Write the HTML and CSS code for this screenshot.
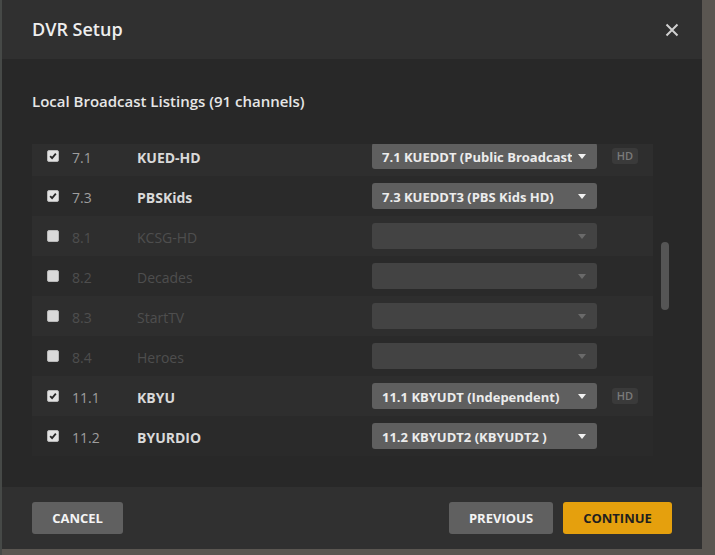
FILE: index.html
```html
<!DOCTYPE html>
<html lang="en">
<head>
<meta charset="utf-8">
<title>DVR Setup</title>
<link rel="stylesheet" href="styles.css">
</head>
<body>
<div class="modal">
  <div class="modal-header">
    <h1 class="modal-title">DVR Setup</h1>
    <button class="close-btn" aria-label="Close">
      <svg width="14" height="14" viewBox="0 0 14 14"><path d="M1.5 1.5 L12.5 12.5 M12.5 1.5 L1.5 12.5" stroke="#d0d0d0" stroke-width="2" fill="none"/></svg>
    </button>
  </div>
  <div class="modal-body">
    <h2 class="section-title">Local Broadcast Listings (91 channels)</h2>
    <div class="list-wrap">
      <div class="list">
        <div class="list-inner">
          <div class="row">
            <span class="cb checked"><svg viewBox="0 0 12 12"><path d="M2.6 6.2 L4.9 8.6 L9.4 3.2" /></svg></span>
            <span class="num">7.1</span>
            <span class="name">KUED-HD</span>
            <div class="select"><span class="select-text">7.1 KUEDDT (Public Broadcasting Service)</span><span class="caret"></span></div>
            <span class="badge">HD</span>
          </div>
          <div class="row">
            <span class="cb checked"><svg viewBox="0 0 12 12"><path d="M2.6 6.2 L4.9 8.6 L9.4 3.2" /></svg></span>
            <span class="num">7.3</span>
            <span class="name">PBSKids</span>
            <div class="select"><span class="select-text">7.3 KUEDDT3 (PBS Kids HD)</span><span class="caret"></span></div>
          </div>
          <div class="row off">
            <span class="cb"></span>
            <span class="num">8.1</span>
            <span class="name">KCSG-HD</span>
            <div class="select"><span class="select-text"></span><span class="caret"></span></div>
          </div>
          <div class="row off">
            <span class="cb"></span>
            <span class="num">8.2</span>
            <span class="name">Decades</span>
            <div class="select"><span class="select-text"></span><span class="caret"></span></div>
          </div>
          <div class="row off">
            <span class="cb"></span>
            <span class="num">8.3</span>
            <span class="name">StartTV</span>
            <div class="select"><span class="select-text"></span><span class="caret"></span></div>
          </div>
          <div class="row off">
            <span class="cb"></span>
            <span class="num">8.4</span>
            <span class="name">Heroes</span>
            <div class="select"><span class="select-text"></span><span class="caret"></span></div>
          </div>
          <div class="row">
            <span class="cb checked"><svg viewBox="0 0 12 12"><path d="M2.6 6.2 L4.9 8.6 L9.4 3.2" /></svg></span>
            <span class="num">11.1</span>
            <span class="name">KBYU</span>
            <div class="select"><span class="select-text">11.1 KBYUDT (Independent)</span><span class="caret"></span></div>
            <span class="badge">HD</span>
          </div>
          <div class="row">
            <span class="cb checked"><svg viewBox="0 0 12 12"><path d="M2.6 6.2 L4.9 8.6 L9.4 3.2" /></svg></span>
            <span class="num">11.2</span>
            <span class="name">BYURDIO</span>
            <div class="select"><span class="select-text">11.2 KBYUDT2 (KBYUDT2 )</span><span class="caret"></span></div>
          </div>
        </div>
      </div>
      <div class="scroll-track"><div class="scroll-thumb"></div></div>
    </div>
  </div>
  <div class="modal-footer">
    <button class="btn btn-cancel">Cancel</button>
    <div class="footer-right">
      <button class="btn btn-prev">Previous</button>
      <button class="btn btn-primary">Continue</button>
    </div>
  </div>
</div>
</body>
</html>
```
FILE: styles.css
```css
* { box-sizing: border-box; }
html, body { margin: 0; padding: 0; }
body {
  width: 715px;
  height: 555px;
  overflow: hidden;
  background: linear-gradient(to right, #464947 0, #464947 2px, #5a5651 2px);
  font-family: "Open Sans", "Noto Sans", "DejaVu Sans", sans-serif;
}
.modal {
  margin-left: 2px;
  width: 700px;
  height: 549px;
  display: flex;
  flex-direction: column;
  background: #282828;
}
.modal-header {
  height: 59px;
  flex: none;
  background: #303030;
  display: flex;
  align-items: center;
  justify-content: space-between;
  padding: 0 23px 0 30px;
}
.modal-title {
  margin: 0;
  font-size: 18px;
  font-weight: 600;
  color: #eeeeee;
  line-height: 24px;
  padding-bottom: 1px;
}
.close-btn {
  background: none;
  border: 0;
  padding: 0;
  width: 14px;
  height: 14px;
  display: flex;
  cursor: pointer;
}
.modal-body {
  flex: 1;
  padding: 31px 0 0 30px;
}
.section-title {
  margin: 0;
  font-size: 15px;
  font-weight: 600;
  color: #e6e6e6;
  line-height: 22px;
}
.list-wrap {
  margin-top: 32px;
  display: flex;
  height: 312px;
}
.list {
  width: 621px;
  height: 312px;
  overflow: hidden;
}
.list-inner {
  margin-top: -8px;
}
.row {
  height: 40px;
  display: flex;
  align-items: center;
  padding-left: 15px;
  background: #2a2a2a;
}
.row:nth-child(odd) { background: #2e2e2e; }
.cb {
  width: 12px;
  height: 12px;
  flex: none;
  border-radius: 2px;
  background: #e2e2e2;
  border: 1px solid #b8b8b8;
  display: flex;
}
.cb svg {
  width: 10px;
  height: 10px;
  fill: none;
  stroke: #262626;
  stroke-width: 2.2;
}
.num {
  width: 65px;
  margin-left: 13px;
  flex: none;
  font-size: 14px;
  color: #9e9e9e;
  padding-top: 2px;
}
.name {
  width: 235px;
  flex: none;
  font-size: 14px;
  font-weight: 700;
  color: #d9d9d9;
  padding-top: 2px;
}
.row.off .num, .row.off .name {
  color: #4e4e4e;
  font-weight: 400;
}
.row.off .cb { background: #d9d9d9; }
.select {
  width: 225px;
  height: 26px;
  flex: none;
  border-radius: 3px;
  background: #5f5f5f;
  display: flex;
  align-items: center;
  padding: 0 11px 0 10px;
}
.row.off .select { background: #434343; }
.select-text {
  flex: 1;
  min-width: 0;
  overflow: hidden;
  white-space: nowrap;
  font-size: 13px;
  font-weight: 700;
  color: #ececec;
  margin-right: 6px;
  padding-top: 1px;
}
.caret {
  width: 0;
  height: 0;
  flex: none;
  border-left: 4px solid transparent;
  border-right: 4px solid transparent;
  border-top: 5px solid #f2f2f2;
}
.row.off .caret { border-top-color: #6a6a6a; }
.badge {
  margin-left: 15px;
  width: 26px;
  height: 16px;
  border-radius: 3px;
  background: #3a3a3a;
  color: #7a7a7a;
  font-size: 11px;
  font-weight: 600;
  line-height: 16px;
  text-align: center;
}
.scroll-track {
  margin-left: 8px;
  width: 8px;
}
.scroll-thumb {
  margin-top: 98px;
  height: 68px;
  border-radius: 4px;
  background: #555555;
}
.modal-footer {
  height: 62px;
  flex: none;
  background: #303030;
  display: flex;
  align-items: center;
  justify-content: space-between;
  padding: 0 30px;
}
.footer-right {
  display: flex;
  gap: 10px;
}
.btn {
  height: 32px;
  border: 0;
  border-radius: 3px;
  font-family: inherit;
  font-size: 13px;
  font-weight: 700;
  text-transform: uppercase;
  color: #f4f4f4;
  background: #606060;
  padding: 0;
  cursor: pointer;
}
.btn-cancel { width: 91px; }
.btn-prev { width: 104px; }
.btn-primary {
  width: 109px;
  background: #e5a00d;
  color: #1f1f1f;
}
```
